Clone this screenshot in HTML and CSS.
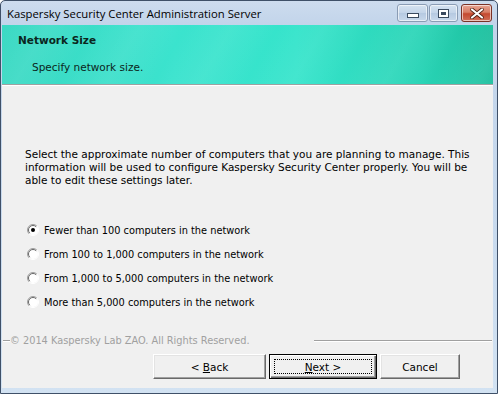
FILE: index.html
```html
<!DOCTYPE html>
<html lang="en">
<head>
    <meta charset="UTF-8">
    <title>Kaspersky Security Center Administration Server</title>
    <link rel="stylesheet" href="styles.css">
</head>
<body>
    <div class="window">
        <div class="titlebar">
            <span class="title">Kaspersky Security Center Administration Server</span>
            <div class="controls">
                <span class="ctl min">
                    <svg width="12" height="5" viewBox="0 0 12 5"><rect x="0.5" y="0.5" width="11" height="4" fill="#fff" stroke="#3a4a5e"/></svg>
                </span>
                <span class="ctl max">
                    <svg width="11" height="9" viewBox="0 0 11 9"><rect x="0.5" y="0.5" width="10" height="8" fill="#fff" stroke="#3a4a5e"/><rect x="3" y="3" width="5" height="3" fill="#3a4a5e"/></svg>
                </span>
                <span class="ctl close">
                    <svg width="14" height="11" viewBox="0 0 14 11"><path d="M2 1.5 L12 9.5 M12 1.5 L2 9.5" stroke="#4a1c10" stroke-width="3.6" stroke-linecap="round"/><path d="M2 1.5 L12 9.5 M12 1.5 L2 9.5" stroke="#fff" stroke-width="2.2" stroke-linecap="round"/></svg>
                </span>
            </div>
        </div>
        <div class="client">
            <div class="banner">
                <h1>Network Size</h1>
                <p>Specify network size.</p>
            </div>
            <div class="page">
                <p class="intro">Select the approximate number of computers that you are planning to manage. This information will be used to configure Kaspersky Security Center properly. You will be able to edit these settings later.</p>
                <div class="options">
                    <label class="option"><span class="radio checked"></span>Fewer than 100 computers in the network</label>
                    <label class="option"><span class="radio"></span>From 100 to 1,000 computers in the network</label>
                    <label class="option"><span class="radio"></span>From 1,000 to 5,000 computers in the network</label>
                    <label class="option"><span class="radio"></span>More than 5,000 computers in the network</label>
                </div>
                <div class="copyright">
                    <span class="rule short"></span>
                    <span class="copy-text">© 2014 Kaspersky Lab ZAO. All Rights Reserved.</span>
                    <span class="rule long"></span>
                </div>
                <div class="buttons">
                    <button class="btn back">&lt; <u>B</u>ack</button>
                    <button class="btn next default"><span class="focus"><u>N</u>ext &gt;</span></button>
                    <button class="btn cancel">Cancel</button>
                </div>
            </div>
        </div>
    </div>
</body>
</html>
```

FILE: styles.css
```css
* {
    box-sizing: border-box;
}

body {
    margin: 0;
    width: 498px;
    height: 394px;
    overflow: hidden;
    font-family: "DejaVu Sans", sans-serif;
    font-size: 10.5px;
    color: #000;
}

.window {
    width: 498px;
    height: 394px;
    border: 1px solid #3f5068;
    border-radius: 5px 5px 0 0;
    background: linear-gradient(#cddcee, #c2d4ea 24px, #c8daee 60%, #d2e2f2);
    display: flex;
    flex-direction: column;
    padding: 0 4px 5px 1px;
}

.titlebar {
    height: 24px;
    display: flex;
    justify-content: space-between;
    align-items: flex-start;
}

.title {
    font-family: "Open Sans", sans-serif;
    font-size: 11.3px;
    line-height: 16px;
    margin: 5px 0 0 5px;
    color: #000;
}

.controls {
    display: flex;
    margin: 3px 1px 0 0;
}

.ctl {
    height: 18px;
    display: flex;
    align-items: center;
    justify-content: center;
    border: 1px solid #8a9cb4;
    border-radius: 3px;
    box-shadow: inset 0 0 0 1px rgba(255, 255, 255, 0.6);
    background: linear-gradient(#d6e3f1, #c3d4e8 50%, #b5c9e1 51%, #c8d8eb);
}

.min {
    width: 31px;
    align-items: flex-end;
    padding-bottom: 3px;
}

.max {
    width: 29px;
    margin-left: 1px;
}

.close {
    width: 31px;
    margin-left: 3px;
    border-color: #7a3226;
    background: linear-gradient(#e8a493, #d77e66 45%, #c4492f 55%, #d0705a);
}

.client {
    flex: 1;
    display: flex;
    flex-direction: column;
    background: #f0f0f0;
}

.banner {
    height: 60px;
    padding: 8px 0 0 16px;
    border-bottom: 1px solid #a0a0a0;
    background:
        repeating-linear-gradient(120deg, rgba(255, 255, 255, 0) 0, rgba(255, 255, 255, 0.07) 40px, rgba(255, 255, 255, 0) 80px),
        linear-gradient(90deg, #3ad9c3 0%, #3be3ce 35%, #35e4cb 60%, #29d4b6 85%, #1dbf9e 100%);
}

.banner h1 {
    margin: 0;
    font-size: 10.5px;
    font-weight: bold;
    line-height: 14px;
    color: #0b2620;
}

.banner p {
    margin: 13px 0 0 14px;
    line-height: 14px;
    color: #0b2620;
}

.page {
    flex: 1;
    border-top: 1px solid #fff;
    display: flex;
    flex-direction: column;
}

.intro {
    margin: 62px 16px 0 23px;
    line-height: 13px;
}

.options {
    margin: 31px 0 0 25px;
    display: flex;
    flex-direction: column;
    font-size: 9.8px;
}

.option {
    height: 24px;
    display: flex;
    align-items: center;
}

.radio {
    width: 12px;
    height: 12px;
    margin-right: 5px;
    background: url("data:image/svg+xml,%3Csvg xmlns='http://www.w3.org/2000/svg' width='12' height='12'%3E%3Ccircle cx='6' cy='6' r='5' fill='%23fff'/%3E%3Cpath d='M2.1 9.9A5.5 5.5 0 0 1 9.9 2.1' stroke='%23a0a0a0' fill='none'/%3E%3Cpath d='M2.8 9.2A4.5 4.5 0 0 1 9.2 2.8' stroke='%23696969' fill='none'/%3E%3Cpath d='M9.9 2.1A5.5 5.5 0 0 1 2.1 9.9' stroke='%23fff' fill='none'/%3E%3C/svg%3E");
}

.radio.checked {
    background: url("data:image/svg+xml,%3Csvg xmlns='http://www.w3.org/2000/svg' width='12' height='12'%3E%3Ccircle cx='6' cy='6' r='5' fill='%23fff'/%3E%3Cpath d='M2.1 9.9A5.5 5.5 0 0 1 9.9 2.1' stroke='%23a0a0a0' fill='none'/%3E%3Cpath d='M2.8 9.2A4.5 4.5 0 0 1 9.2 2.8' stroke='%23696969' fill='none'/%3E%3Cpath d='M9.9 2.1A5.5 5.5 0 0 1 2.1 9.9' stroke='%23fff' fill='none'/%3E%3Ccircle cx='6' cy='6' r='2' fill='%23000'/%3E%3C/svg%3E");
}

.copyright {
    margin-top: 20px;
    height: 14px;
    display: flex;
    align-items: center;
    padding: 0 1px;
}

.rule {
    height: 2px;
    border-top: 1px solid #a0a0a0;
    border-bottom: 1px solid #fff;
}

.rule.short {
    width: 7px;
}

.rule.long {
    flex: 1;
    margin-left: 64px;
}

.copy-text {
    color: #a0a0a0;
    font-size: 9.8px;
    line-height: 14px;
    white-space: nowrap;
}

.buttons {
    margin: 6px 0 0 151px;
    display: flex;
}

.btn {
    height: 25px;
    padding: 0;
    font-family: "DejaVu Sans", sans-serif;
    font-size: 10.5px;
    color: #000;
    background: #f0f0f0;
    border: 1px solid;
    border-color: #fff #696969 #696969 #fff;
    box-shadow: inset -1px -1px 0 #a0a0a0, inset 1px 1px 0 #e3e3e3;
}

.back {
    width: 113px;
}

.next {
    width: 108px;
    margin-left: 3px;
}

.cancel {
    width: 80px;
    margin-left: 3px;
}

.default {
    border: 1px solid #000;
    box-shadow: inset 1px 1px 0 #fff, inset -1px -1px 0 #696969, inset -2px -2px 0 #a0a0a0;
    position: relative;
}

.focus {
    position: absolute;
    top: 4px;
    left: 4px;
    right: 4px;
    bottom: 4px;
    border: 1px dotted #000;
    display: flex;
    align-items: center;
    justify-content: center;
}
```
